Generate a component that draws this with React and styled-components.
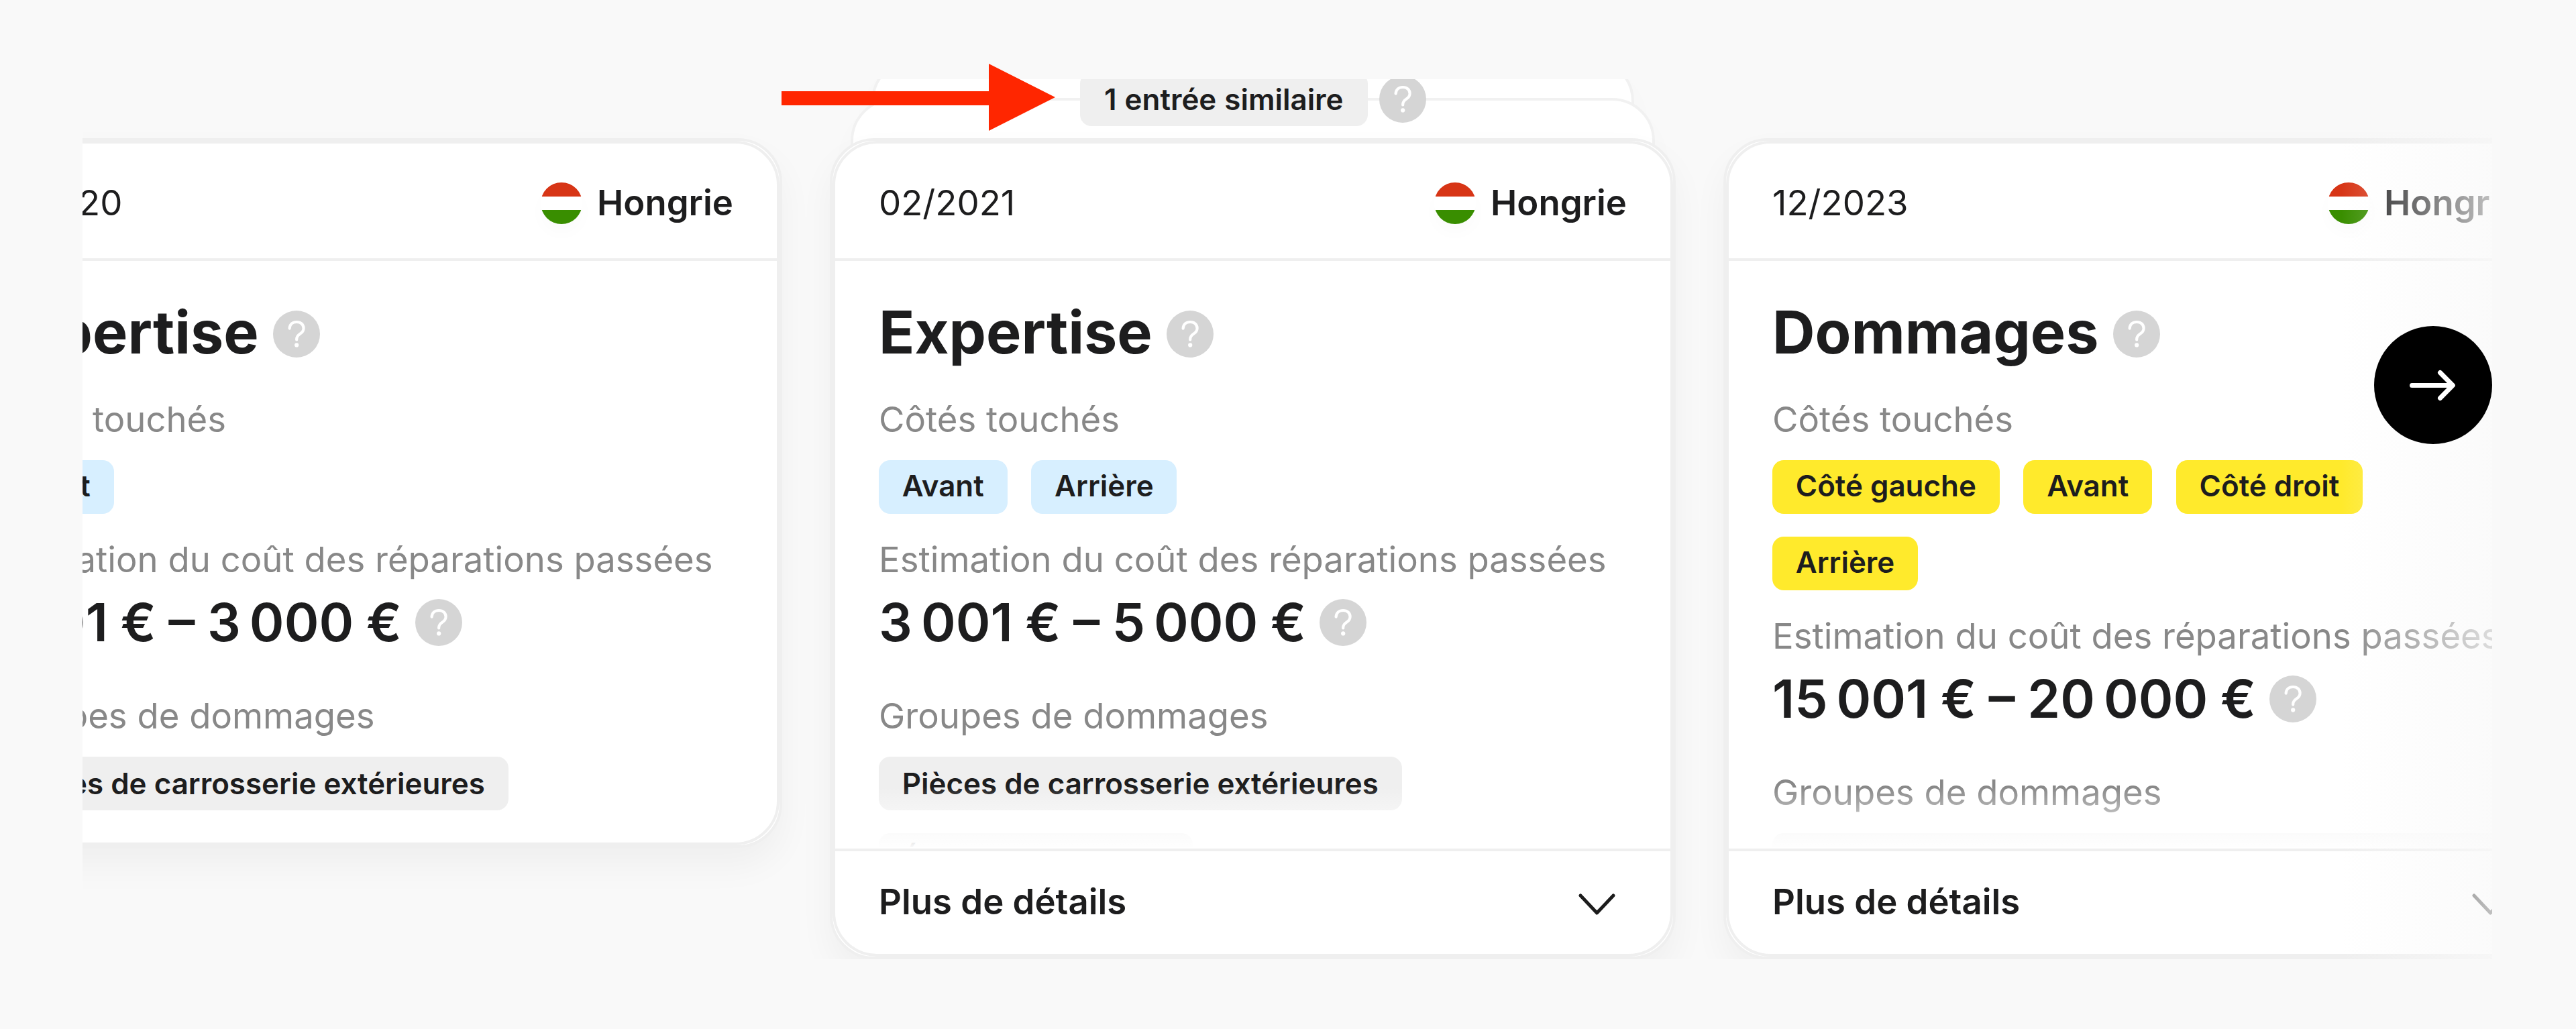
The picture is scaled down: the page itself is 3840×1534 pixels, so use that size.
import styled, {createGlobalStyle} from "styled-components";

const ENTRIES = [
    {
        date: "10/2020",
        country: "Hongrie",
        title: "Expertise",
        tone: "blue",
        sides: ["Avant"],
        price: "1\u202f001\u00a0€ – 3\u202f000\u00a0€",
        groups: ["Pièces de carrosserie extérieures"],
    },
    {
        date: "02/2021",
        country: "Hongrie",
        title: "Expertise",
        tone: "blue",
        sides: ["Avant", "Arrière"],
        price: "3\u202f001\u00a0€ – 5\u202f000\u00a0€",
        groups: ["Pièces de carrosserie extérieures", "Éclairage extérieur"],
        similar: "1 entrée similaire",
        collapsed: true,
    },
    {
        date: "12/2023",
        country: "Hongrie",
        title: "Dommages",
        tone: "yellow",
        sides: ["Côté gauche", "Avant", "Côté droit", "Arrière"],
        price: "15\u202f001\u00a0€ – 20\u202f000\u00a0€",
        groups: ["Systèmes de sécurité et éclairage extérieur avant"],
        collapsed: true,
    },
];

const TONES = {
    blue: "#d7efff",
    yellow: "#ffea2c",
    grey: "#efefef",
};

function Help() {
    return (
        <HelpIcon viewBox="0 0 70 70">
            <circle cx="35" cy="35" r="35" fill="#d5d5d5" />
            <path
                d="M24.6 26.6C24.9 20.8 29 17 35.2 17C41.4 17 45.6 20.8 45.6 26.2C45.6 30.2 43.6 32.6 40.2 34.8C36.6 37.2 35.2 39.2 35.2 42.6V43.4"
                fill="none"
                stroke="#fff"
                strokeWidth="4.2"
                strokeLinecap="round"
                strokeLinejoin="round"
            />
            <circle cx="35.2" cy="51.4" r="3.1" fill="#fff" />
        </HelpIcon>
    )
}

function Entry({entry}) {
    return (
        <Slot>
            {entry.similar && (
                <>
                    <Sheet $inset={62} $top={-119} />
                    <Sheet $inset={31} $top={-60} />
                    <Similar>
                        <Chip $tone="grey">{entry.similar}</Chip>
                        <Help />
                    </Similar>
                </>
            )}
            <Card>
                <CardInner>
                    <CardHeader>
                        <Text>{entry.date}</Text>
                        <Country>
                            <Flag />
                            <StrongText>{entry.country}</StrongText>
                        </Country>
                    </CardHeader>
                    <CardBody $collapsed={entry.collapsed}>
                        <Title>{entry.title}<Help /></Title>
                        <Label>Côtés touchés</Label>
                        <Chips>
                            {entry.sides.map((side) => <Chip key={side} $tone={entry.tone} $lift={4}>{side}</Chip>)}
                        </Chips>
                        <CostLabel>Estimation du coût des réparations passées</CostLabel>
                        <Price>{entry.price}<Help /></Price>
                        <Label>Groupes de dommages</Label>
                        <Chips>
                            {entry.groups.map((group) => <Chip key={group} $tone="grey">{group}</Chip>)}
                        </Chips>
                    </CardBody>
                    {entry.collapsed && (
                        <CardFooter>
                            <StrongText>Plus de détails</StrongText>
                            <Chevron viewBox="0 0 56 36">
                                <path d="M4 4L28.5 30L53 4" fill="none" stroke="#1c1c1c" strokeWidth="5" strokeLinecap="round" strokeLinejoin="round" />
                            </Chevron>
                        </CardFooter>
                    )}
                </CardInner>
            </Card>
        </Slot>
    )
}

function App() {
    return (
        <Page>
            <GlobalStyle />
            <Carousel>
                <Track>
                    {ENTRIES.map((entry) => <Entry key={entry.date} entry={entry} />)}
                </Track>
                <SideFade />
                <NextButton aria-label="Suivant">
                    <NextIcon viewBox="0 0 176 176">
                        <path d="M56.5 88.5H117M98.5 69.5L117.3 88.5L98.5 107.5" fill="none" stroke="#fff" strokeWidth="7" strokeLinecap="round" strokeLinejoin="round" />
                    </NextIcon>
                </NextButton>
            </Carousel>
            <Pointer viewBox="0 0 408 100">
                <path d="M0 41H309V0L408 50L309 100V62H0Z" fill="#ff2600" />
            </Pointer>
        </Page>
    )
}

const GlobalStyle = createGlobalStyle`
    body {
        margin: 0;
        background: #f9f9f9;
    }

    * {
        box-sizing: border-box;
    }
`;

const Page = styled.main`
    position: relative;
    width: 3840px;
    height: 1534px;
    padding: 118px 125px 104px 123px;
    overflow: hidden;
    background: #f9f9f9;
    color: #1d1d1e;
    font-family: Inter, "Liberation Sans", sans-serif;
`;

const Carousel = styled.section`
    position: relative;
    height: 1312px;
    overflow: hidden;
`;

const Track = styled.div`
    display: flex;
    align-items: flex-start;
    gap: 71px;
    margin-left: -218px;
    padding-top: 88px;
`;

const Slot = styled.div`
    position: relative;
    flex: none;
    width: 1261px;
`;

const Sheet = styled.div`
    position: absolute;
    top: ${(props) => props.$top}px;
    left: ${(props) => props.$inset}px;
    right: ${(props) => props.$inset}px;
    height: 600px;
    border: 4px solid #f1f1f1;
    border-radius: 64px;
    background: #fff;
    box-shadow: 0 26px 53px rgba(0, 0, 0, 0.02);
`;

const Chip = styled.span`
    display: flex;
    align-items: center;
    flex: none;
    height: 80px;
    padding: 0 34.8px ${(props) => props.$lift || 1}px;
    border-radius: 17px;
    background: ${(props) => TONES[props.$tone]};
    font-size: 43.9px;
    font-weight: 600;
    white-space: nowrap;
`;

const Similar = styled.div`
    position: absolute;
    top: -98px;
    left: 373px;
    display: flex;
    align-items: center;
    gap: 17px;

    ${Chip} {
        padding: 0 36px 1px;
        word-spacing: 1px;
    }
`;

const Card = styled.article`
    position: relative;
    border: 4px solid #efefef;
    border-radius: 66px;
    background: #fff;
    box-shadow: 0 26px 53px rgba(0, 0, 0, 0.045);
`;

const CardInner = styled.div`
    border: 4px solid #efefef;
    border-radius: 66px;
    overflow: hidden;
`;

const CardHeader = styled.header`
    display: flex;
    align-items: center;
    justify-content: space-between;
    height: 175px;
    padding: 5px 65px 0;
    border-bottom: 4px solid #efefef;
`;

const Text = styled.span`
    font-size: 52.7px;
    line-height: 80px;
`;

const StrongText = styled(Text)`
    font-weight: 600;
`;

const Country = styled.div`
    display: flex;
    align-items: center;
    gap: 22px;
`;

const Flag = styled.span`
    width: 62px;
    height: 62px;
    margin-top: 1px;
    border-radius: 50%;
    background: linear-gradient(#d73516 0 21px, #fff 21px 41px, #398e00 41px);
    box-shadow: 0 13px 26px rgba(0, 0, 0, 0.02);
`;

const CardBody = styled.div`
    position: relative;
    height: ${(props) => props.$collapsed ? "876px" : "auto"};
    padding: 53px 65px 48px;
    overflow: hidden;

    &::after {
        content: "";
        display: ${(props) => props.$collapsed ? "block" : "none"};
        position: absolute;
        right: 0;
        bottom: 0;
        left: 0;
        height: 92px;
        background: linear-gradient(rgba(255, 255, 255, 0), #fff);
    }
`;

const Title = styled.h2`
    display: flex;
    align-items: center;
    gap: 21px;
    margin: 0 0 37px;
    font-size: 88px;
    font-weight: 700;
    line-height: 106px;

    svg {
        margin-top: 5px;
    }
`;

const Label = styled.p`
    margin: 0 0 21px;
    color: #888;
    font-size: 52.65px;
    line-height: 80px;
    white-space: nowrap;
`;

const CostLabel = styled(Label)`
    margin: 28px 0 6px;
`;

const Price = styled.div`
    display: flex;
    align-items: center;
    gap: 20px;
    margin-bottom: 51px;
    font-size: 78.5px;
    font-weight: 600;
    line-height: 96px;
    word-spacing: -1.3px;
`;

const Chips = styled.div`
    display: flex;
    flex-wrap: wrap;
    gap: 34px 35.8px;
`;

const CardFooter = styled.footer`
    display: flex;
    align-items: center;
    justify-content: space-between;
    height: 157px;
    padding: 0 82px 4px 65px;
    border-top: 4px solid #efefef;
`;

const HelpIcon = styled.svg`
    flex: none;
    width: 70px;
    height: 70px;
`;

const Chevron = styled.svg`
    width: 56px;
    height: 36px;
    margin-top: 10px;
`;

const SideFade = styled.div`
    position: absolute;
    top: 0;
    right: 0;
    bottom: 0;
    width: 225px;
    background: linear-gradient(to right, rgba(249, 249, 249, 0), rgba(249, 249, 249, 0.74));
`;

const NextButton = styled.button`
    position: absolute;
    top: 368px;
    right: 0;
    width: 176px;
    height: 176px;
    padding: 0;
    border: 0;
    border-radius: 50%;
    background: #000;
`;

const NextIcon = styled.svg`
    display: block;
    width: 176px;
    height: 176px;
`;

const Pointer = styled.svg`
    position: absolute;
    top: 95px;
    left: 1165px;
    width: 408px;
    height: 100px;
`;

export default App;
